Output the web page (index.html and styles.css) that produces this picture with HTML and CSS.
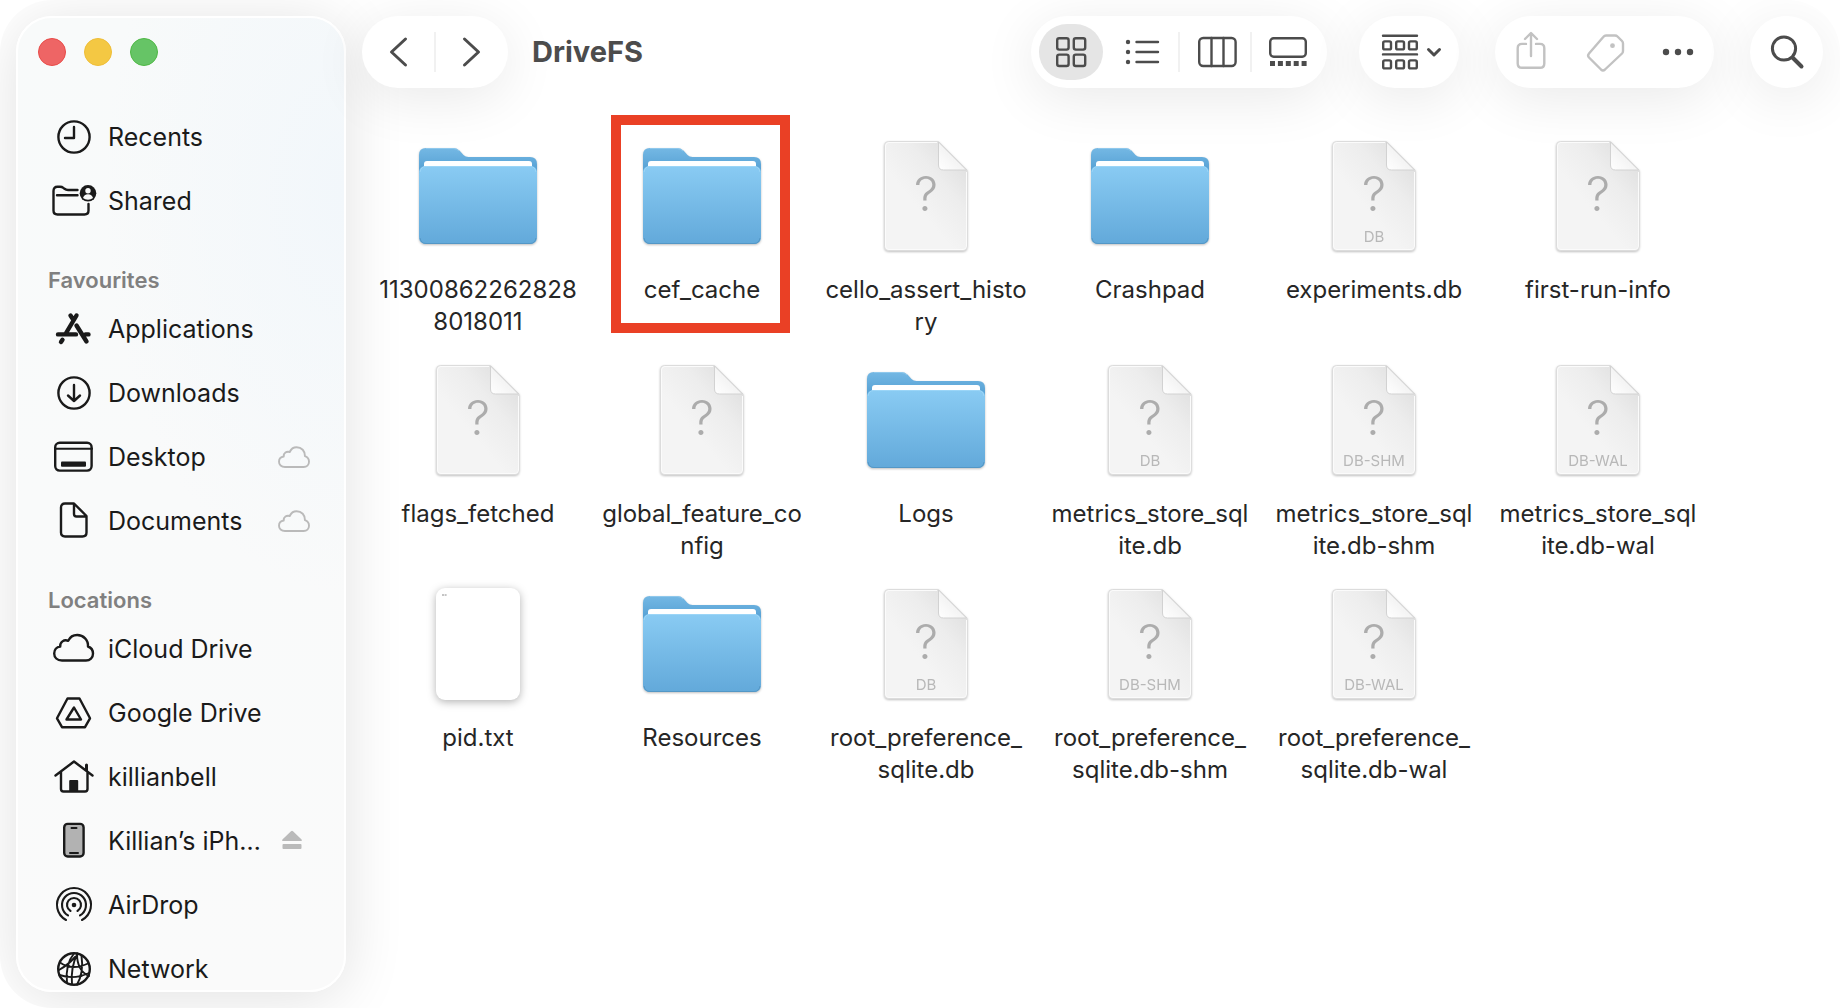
FILE: index.html
```html
<!DOCTYPE html>
<html lang="en-GB">
<head>
<meta charset="utf-8">
<title>DriveFS</title>
<link rel="stylesheet" href="styles.css">
</head>
<body>
<svg class="defs" aria-hidden="true">
  <defs>
    <linearGradient id="folder-front" x1="0" y1="0" x2="0" y2="1">
      <stop offset="0" stop-color="#89cbf3"/><stop offset="1" stop-color="#62a9da"/>
    </linearGradient>
    <linearGradient id="folder-back" x1="0" y1="0" x2="0" y2="1">
      <stop offset="0" stop-color="#74b8e4"/><stop offset="1" stop-color="#4f9bd0"/>
    </linearGradient>
    <linearGradient id="page-fill" x1="0.95" y1="0.1" x2="0.45" y2="0.65">
      <stop offset="0" stop-color="#dedede"/><stop offset="0.5" stop-color="#ededed"/><stop offset="1" stop-color="#f4f4f4"/>
    </linearGradient>
    <linearGradient id="fold-fill" x1="0" y1="1" x2="0.6" y2="0.4">
      <stop offset="0" stop-color="#ffffff"/><stop offset="1" stop-color="#f1f1f1"/>
    </linearGradient>
  </defs>

  <symbol id="folder" viewBox="0 0 128 128">
    <path d="M5 40V23q0-7 7-7h27q4 0 6.500 2.500l4 4.500q2 2 5 2H116q7 0 7 7v12H5z" fill="url(#folder-back)"/>
    <path d="M12 16.500h27q4 0 6 2.500" fill="none" stroke="#8fc8ec"/>
    <path d="M10 44V32q0-3 3-3H115q3 0 3 3v12z" fill="#fff"/>
    <path d="M5 41q0-7 7-7H116q7 0 7 7v64q0 7-7 7H12q-7 0-7-7z" fill="url(#folder-front)"/>
    <path d="M6 106q1 5.500 6 5.500H116q5 0 6-5.500" fill="none" stroke="#5397c6"/>
    <path d="M6 40q1-5.500 6-5.500H116q5 0 6 5.500" fill="none" stroke="#9bd5f7"/>
  </symbol>
  <symbol id="page" viewBox="0 0 128 128">
    <path d="M26.500 9.500H76.500L105 38V114.500q0 4-4 4H26.500q-4 0-4-4V13.500q0-4 4-4z" fill="url(#page-fill)" stroke="#dcdcdc"/>
    <path d="M104.500 40V114q0 3.500-3.500 3.500H27q-3.500 0-3.500-3.500V14q0-3.500 3.500-3.500H75" fill="none" stroke="#fbfbfb"/>
    <path d="M76.500 10V33q0 5 5 5H104.500z" fill="url(#fold-fill)" stroke="#d2d2d2"/>
  </symbol>
  <symbol id="text-page" viewBox="0 0 128 128">
    <rect x="22" y="8" width="84" height="112" rx="9" fill="#fff"/>
    <path d="M28 15h5" fill="none" stroke="#8a8a8a" stroke-dasharray="2 .6"/>
  </symbol>

  <symbol id="i-clock" viewBox="0 0 48 48"><circle cx="24" cy="24" r="15.600"/><path d="M24 14V25H15"/></symbol>
  <symbol id="i-shared" viewBox="0 0 48 48">
    <path d="M27.500 13H18q-2 0-3.500-1.200l-1.200-.900Q12 9.800 10 9.800H7.500Q3.500 9.800 3.500 14V33.500q0 4 4 4H34.500q4 0 4-4V27M7 18.200H27.500"/>
    <circle class="solid" cx="38" cy="16.300" r="8.300"/>
    <circle class="hollow" cx="38" cy="13.800" r="2.700"/><path class="hollow" d="M33 21q1-3.800 5-3.800t5 3.800q-2 1.800-5 1.800t-5-1.800z"/>
  </symbol>
  <symbol id="i-apps" viewBox="0 0 48 48">
    <g stroke-width="4.400"><path d="M26.500 10.500L15.500 29M20.500 10.500L23.500 15M26.500 20.500L36.500 36.500M8 29.400H26M35.500 29.400H38.500M12.500 34.800L11 37"/></g>
  </symbol>
  <symbol id="i-download" viewBox="0 0 48 48"><circle cx="24" cy="24" r="15.600"/><path d="M24 16V32M18 26.500L24 32l6-5.500"/></symbol>
  <symbol id="i-desktop" viewBox="0 0 48 48"><rect x="5.200" y="9.800" width="36.400" height="27.800" rx="4.500"/><path d="M5 15.700H42" stroke-width="2"/><rect class="solid" x="11" y="28.500" width="25" height="5.200" rx="1"/></symbol>
  <symbol id="i-doc" viewBox="0 0 48 48"><path d="M15 6.500H24L36.500 19V35.500q0 4-4 4H15q-4 0-4-4V10.500q0-4 4-4zM24 7V17q0 2.500 2.500 2.500H36"/></symbol>
  <symbol id="i-cloud" viewBox="0 0 48 48"><path d="M12 35.500C7 35.500 4.200 32.300 4.200 28.500C4.200 25 6.500 22 10.200 21.500C9.800 17 14 14.200 18.200 15.800C20 12 23.500 10 27.200 10C33.500 10 38.400 15 38 21.500C41 22.500 43 25.300 43 28.700C43 32.600 40 35.500 36 35.500Z"/></symbol>
  <symbol id="i-drive" viewBox="0 0 48 48"><path d="M17.500 9.500H29.500L40 29.300L35 38.200H12L7 29.300ZM24 18.500L31 30.500H16.500Z"/></symbol>
  <symbol id="i-home" viewBox="0 0 48 48"><path d="M5.500 22.500L24 8.500L42.500 22.500M11 19V36q0 2.500 2.500 2.500H35q2.500 0 2.500-2.500V19"/><path class="solid" d="M19.200 38V28q0-1 1-1h7q1 0 1 1v10zM35 17v-5q0-1.500 1.500-1.500t1.500 1.500v7z"/></symbol>
  <symbol id="i-phone" viewBox="0 0 48 48"><rect x="14.200" y="6.900" width="19.400" height="32.600" rx="3.500" fill="#b2b2b2"/><path d="M21.500 11h5M20 36h8" stroke-width="2"/></symbol>
  <symbol id="i-airdrop" viewBox="0 0 48 48">
    <g stroke-width="2.100"><path d="M16 39A17 17 0 1 1 32 39M18 34.400A12 12 0 1 1 30 34.400M20.500 30A7 7 0 1 1 27.500 30"/></g><circle class="solid" cx="24" cy="24" r="2.300"/>
  </symbol>
  <symbol id="i-network" viewBox="0 0 48 48"><circle cx="24" cy="24" r="15.800"/>
    <g stroke-width="1.900"><path d="M24 8.500Q15 19 17 38M27.500 8.500Q20.500 22 22 39M27 8.500Q27 26 39 31M31.500 10.500Q34 28 27 39.500M10 17.500Q22 26 38 18.500M9 25Q18 20 25 12M9.500 30Q24 35 39 28"/></g><circle class="solid" cx="18.500" cy="21" r="1.500"/><circle class="solid" cx="31" cy="30.500" r="1.500"/>
  </symbol>
  <symbol id="i-cloud-small" viewBox="0 0 36 36"><path d="M9 28C5.300 28 3 25.700 3 22.700C3 20 5 17.900 7.700 17.500C7.500 14 10.500 12 13.700 13C15 10 17.700 8.200 20.600 8.200C25.500 8.200 29.200 12 29 17.200C31.300 18 33 20 33 22.800C33 25.800 30.700 28 27.700 28Z" stroke-width="1.900"/></symbol>
  <symbol id="i-eject" viewBox="0 0 36 36"><path class="solid" d="M15 8.200q1-1 2 0L25.600 16.500q1 1.500-.600 1.500H7q-1.600 0-.600-1.500zM7.500 21H24.500q1 0 1 1v3q0 1-1 1H7.500q-1 0-1-1v-3q0-1 1-1z"/></symbol>

  <symbol id="t-back" viewBox="0 0 48 48"><path d="M31.500 11L17.500 24l14 13"/></symbol>
  <symbol id="t-forward" viewBox="0 0 48 48"><path d="M16.500 11l14 13-14 13"/></symbol>
  <symbol id="t-icons" viewBox="0 0 48 48"><rect x="10.200" y="10.200" width="11.400" height="11.400" rx="2"/><rect x="26.800" y="10.200" width="11.400" height="11.400" rx="2"/><rect x="10.200" y="26.600" width="11.400" height="11.400" rx="2"/><rect x="26.800" y="26.600" width="11.400" height="11.400" rx="2"/></symbol>
  <symbol id="t-list" viewBox="0 0 48 48"><path d="M17.500 14H39M17.500 24H39M17.500 34H39"/><g class="solid"><circle cx="9" cy="14" r="2.200"/><circle cx="9" cy="24" r="2.200"/><circle cx="9" cy="34" r="2.200"/></g></symbol>
  <symbol id="t-columns" viewBox="0 0 48 48"><rect x="8.200" y="10" width="36.400" height="28" rx="4"/><path d="M20.500 10V38M32.500 10V38"/></symbol>
  <symbol id="t-gallery" viewBox="0 0 48 48"><rect x="7.200" y="10.200" width="35.600" height="18.600" rx="3.500"/><path d="M7 35.500H44" stroke-width="5" stroke-linecap="butt" stroke-dasharray="5 2.900"/></symbol>
  <symbol id="t-group" viewBox="0 0 48 48"><path d="M7 7.700H41M7 26.400H41"/><g><rect x="7.200" y="13.400" width="7.800" height="8" rx="1.500"/><rect x="20.200" y="13.400" width="7.800" height="8" rx="1.500"/><rect x="33" y="13.400" width="7.800" height="8" rx="1.500"/><rect x="7.200" y="32.400" width="7.800" height="8" rx="1.500"/><rect x="20.200" y="32.400" width="7.800" height="8" rx="1.500"/><rect x="33" y="32.400" width="7.800" height="8" rx="1.500"/></g></symbol>
  <symbol id="t-chevron" viewBox="0 0 16 48"><path d="M2.500 21.500L8 27l5.500-5.500"/></symbol>
  <symbol id="t-share" viewBox="0 0 48 48"><path d="M18 15.900H14q-4.300 0-4.300 4.300V35.500q0 4.300 4.300 4.300H32q4.300 0 4.300-4.300V20.200q0-4.300-4.300-4.300H28M23 5.500V28M17 11l6-6 6 6"/></symbol>
  <symbol id="t-tag" viewBox="0 0 48 48"><path d="M25 7.500H34Q35.500 7.500 36.500 8.500L41 13Q42 14 42 15.500V23Q42 24.500 41 25.500L24 41.500Q22 43.300 20 41.500L8 29.500Q6.200 27.500 8 25.500L22.500 8.800Q23.500 7.500 25 7.500Z"/><circle class="solid" cx="31.500" cy="17.700" r="2.400"/></symbol>
  <symbol id="t-more" viewBox="0 0 48 48"><g class="solid"><circle cx="12" cy="24" r="3.200"/><circle cx="24" cy="24" r="3.200"/><circle cx="36" cy="24" r="3.200"/></g></symbol>
  <symbol id="t-search" viewBox="0 0 48 48"><g stroke-width="3"><circle cx="21" cy="20.500" r="11.600"/></g><path d="M30 30L38.500 38.500" stroke-width="4"/></symbol>
</svg>

<div class="window">
  <aside class="sidebar">
    <div class="lights">
      <button class="light light-close" aria-label="Close"></button>
      <button class="light light-minimise" aria-label="Minimise"></button>
      <button class="light light-zoom" aria-label="Zoom"></button>
    </div>
    <nav class="places">
      <a class="place" href="#"><svg class="icon"><use href="#i-clock"/></svg><span class="place-name">Recents</span></a>
      <a class="place" href="#"><svg class="icon"><use href="#i-shared"/></svg><span class="place-name">Shared</span></a>
      <h2 class="section">Favourites</h2>
      <a class="place" href="#"><svg class="icon"><use href="#i-apps"/></svg><span class="place-name">Applications</span></a>
      <a class="place" href="#"><svg class="icon"><use href="#i-download"/></svg><span class="place-name">Downloads</span></a>
      <a class="place" href="#"><svg class="icon"><use href="#i-desktop"/></svg><span class="place-name">Desktop</span><svg class="status"><use href="#i-cloud-small"/></svg></a>
      <a class="place" href="#"><svg class="icon"><use href="#i-doc"/></svg><span class="place-name">Documents</span><svg class="status"><use href="#i-cloud-small"/></svg></a>
      <h2 class="section">Locations</h2>
      <a class="place" href="#"><svg class="icon"><use href="#i-cloud"/></svg><span class="place-name">iCloud Drive</span></a>
      <a class="place" href="#"><svg class="icon"><use href="#i-drive"/></svg><span class="place-name">Google Drive</span></a>
      <a class="place" href="#"><svg class="icon"><use href="#i-home"/></svg><span class="place-name">killianbell</span></a>
      <a class="place" href="#"><svg class="icon"><use href="#i-phone"/></svg><span class="place-name">Killian’s iPh…</span><svg class="status"><use href="#i-eject"/></svg></a>
      <a class="place" href="#"><svg class="icon"><use href="#i-airdrop"/></svg><span class="place-name">AirDrop</span></a>
      <a class="place" href="#"><svg class="icon"><use href="#i-network"/></svg><span class="place-name">Network</span></a>
    </nav>
  </aside>

  <main class="content">
    <header class="toolbar">
      <div class="group nav-group">
        <button class="tool" aria-label="Back"><svg class="icon"><use href="#t-back"/></svg></button>
        <span class="divider"></span>
        <button class="tool" aria-label="Forward"><svg class="icon"><use href="#t-forward"/></svg></button>
      </div>
      <h1 class="title">DriveFS</h1>
      <div class="view-tools">
        <div class="group view-group">
          <button class="tool view selected" aria-label="Icons"><svg class="icon"><use href="#t-icons"/></svg></button>
          <span class="divider clear"></span>
          <button class="tool view" aria-label="List"><svg class="icon"><use href="#t-list"/></svg></button>
          <span class="divider"></span>
          <button class="tool view" aria-label="Columns"><svg class="icon"><use href="#t-columns"/></svg></button>
          <span class="divider"></span>
          <button class="tool view" aria-label="Gallery"><svg class="icon"><use href="#t-gallery"/></svg></button>
        </div>
        <div class="group">
          <button class="tool arrange" aria-label="Group by"><svg class="icon"><use href="#t-group"/></svg><svg class="chevron"><use href="#t-chevron"/></svg></button>
        </div>
      </div>
      <div class="group">
        <button class="tool" disabled aria-label="Share"><svg class="icon"><use href="#t-share"/></svg></button>
        <button class="tool" disabled aria-label="Tags"><svg class="icon"><use href="#t-tag"/></svg></button>
        <button class="tool" aria-label="More"><svg class="icon"><use href="#t-more"/></svg></button>
      </div>
      <div class="group">
        <button class="tool" aria-label="Search"><svg class="icon"><use href="#t-search"/></svg></button>
      </div>
    </header>

    <ul class="files">
      <li class="file"><svg class="art folder"><use href="#folder"/></svg><span class="name">11300862262828<br>8018011</span></li>
      <li class="file marked"><svg class="art folder"><use href="#folder"/></svg><span class="name">cef_cache</span></li>
      <li class="file"><svg class="art page"><use href="#page"/><text class="mark" x="64" y="79">?</text></svg><span class="name">cello_assert_histo<br>ry</span></li>
      <li class="file"><svg class="art folder"><use href="#folder"/></svg><span class="name">Crashpad</span></li>
      <li class="file"><svg class="art page"><use href="#page"/><text class="mark" x="64" y="79">?</text><text class="kind" x="64" y="110">DB</text></svg><span class="name">experiments.db</span></li>
      <li class="file"><svg class="art page"><use href="#page"/><text class="mark" x="64" y="79">?</text></svg><span class="name">first-run-info</span></li>

      <li class="file"><svg class="art page"><use href="#page"/><text class="mark" x="64" y="79">?</text></svg><span class="name">flags_fetched</span></li>
      <li class="file"><svg class="art page"><use href="#page"/><text class="mark" x="64" y="79">?</text></svg><span class="name">global_feature_co<br>nfig</span></li>
      <li class="file"><svg class="art folder"><use href="#folder"/></svg><span class="name">Logs</span></li>
      <li class="file"><svg class="art page"><use href="#page"/><text class="mark" x="64" y="79">?</text><text class="kind" x="64" y="110">DB</text></svg><span class="name">metrics_store_sql<br>ite.db</span></li>
      <li class="file"><svg class="art page"><use href="#page"/><text class="mark" x="64" y="79">?</text><text class="kind" x="64" y="110">DB-SHM</text></svg><span class="name">metrics_store_sql<br>ite.db-shm</span></li>
      <li class="file"><svg class="art page"><use href="#page"/><text class="mark" x="64" y="79">?</text><text class="kind" x="64" y="110">DB-WAL</text></svg><span class="name">metrics_store_sql<br>ite.db-wal</span></li>

      <li class="file"><svg class="art text-page"><use href="#text-page"/></svg><span class="name">pid.txt</span></li>
      <li class="file"><svg class="art folder"><use href="#folder"/></svg><span class="name">Resources</span></li>
      <li class="file"><svg class="art page"><use href="#page"/><text class="mark" x="64" y="79">?</text><text class="kind" x="64" y="110">DB</text></svg><span class="name">root_preference_<br>sqlite.db</span></li>
      <li class="file"><svg class="art page"><use href="#page"/><text class="mark" x="64" y="79">?</text><text class="kind" x="64" y="110">DB-SHM</text></svg><span class="name">root_preference_<br>sqlite.db-shm</span></li>
      <li class="file"><svg class="art page"><use href="#page"/><text class="mark" x="64" y="79">?</text><text class="kind" x="64" y="110">DB-WAL</text></svg><span class="name">root_preference_<br>sqlite.db-wal</span></li>
    </ul>
  </main>
</div>
</body>
</html>
```
FILE: styles.css
```css
* {
  box-sizing: border-box;
}

body {
  margin: 0;
  background: #fff;
  color: #262626;
  font-family: Inter, "Liberation Sans", sans-serif;
}

button {
  margin: 0;
  padding: 0;
  border: 0;
  background: none;
  color: inherit;
  font: inherit;
}

.defs {
  position: absolute;
  width: 0;
  height: 0;
}

.window {
  display: flex;
  min-height: 100vh;
  border-radius: 52px;
  background: #fff;
  overflow: hidden;
}

/* Sidebar */

.sidebar {
  flex: 0 0 330px;
  height: calc(100vh - 32px);
  margin: 16px 0 16px 16px;
  border: 2px solid #fff;
  border-radius: 36px;
  background:
    radial-gradient(ellipse 240px 400px at 100% 18%, #f2f7fb, rgba(242, 247, 251, 0)),
    linear-gradient(#f8fafa, #fafafa);
  box-shadow: 0 6px 60px rgba(0, 0, 0, 0.12);
  color: #1a1a1a;
  overflow: hidden;
}

.lights {
  display: flex;
  gap: 18px;
  height: 87px;
  padding: 20px 20px 0;
}

.light {
  width: 28px;
  height: 28px;
  border: 1px solid;
  border-radius: 50%;
}

.light-close {
  background: #ee6565;
  border-color: #e84b48;
}

.light-minimise {
  background: #f4c843;
  border-color: #eebd38;
}

.light-zoom {
  background: #66c466;
  border-color: #4fb845;
}

.section {
  margin: 0;
  padding: 30px 30px 0;
  color: #808080;
  font-size: 22px;
  font-weight: 600;
  line-height: 34px;
}

.place {
  display: flex;
  align-items: center;
  gap: 10px;
  height: 64px;
  padding: 0 32px;
  color: inherit;
  font-size: 25px;
  line-height: 32px;
  text-decoration: none;
  white-space: nowrap;
}

.place-name {
  flex: 1;
}

.icon {
  flex: none;
  width: 48px;
  height: 48px;
}

.icon,
.chevron,
.status {
  fill: none;
  stroke: currentColor;
  stroke-width: 2.4px;
  stroke-linecap: round;
  stroke-linejoin: round;
}

.solid {
  fill: currentColor;
  stroke: none;
}

.hollow {
  fill: #f9fafa;
  stroke: none;
}

.status {
  flex: none;
  width: 36px;
  height: 36px;
  color: #bababa;
}

/* Toolbar */

.content {
  flex: 1;
  min-width: 0;
}

.toolbar {
  display: flex;
  align-items: center;
  gap: 36px;
  padding: 16px 17px 0 16px;
  color: #4c4c4c;
}

.group {
  display: flex;
  align-items: center;
  height: 72px;
  border-radius: 36px;
  background: #fff;
  box-shadow: 0 10px 56px rgba(0, 0, 0, 0.09);
}

.tool {
  display: flex;
  align-items: center;
  justify-content: center;
  width: 73px;
  height: 56px;
  border-radius: 28px;
}

.tool:disabled {
  color: #c2c2c2;
}

.nav-group .tool {
  width: 72px;
}

.nav-group .icon {
  stroke-width: 3px;
}

.view-tools {
  display: flex;
  gap: 32px;
}

.view-group {
  padding: 0 8px;
}

.tool.view {
  width: 64px;
}

.tool.selected {
  background: #e5e5e5;
}

.tool.arrange {
  gap: 2px;
  width: 100px;
}

.chevron {
  width: 16px;
  height: 48px;
  stroke-width: 3px;
}

.divider {
  width: 2px;
  height: 40px;
  background: #f1f1f1;
}

.view-group .divider {
  margin: 0 3px;
}

.divider.clear {
  background: none;
}

.title {
  flex: 1;
  margin: 0 0 0 -12px;
  font-size: 29px;
  font-weight: 700;
  line-height: 36px;
}

/* Files */

.files {
  display: grid;
  grid-template-columns: repeat(auto-fill, 224px);
  grid-auto-rows: 224px;
  margin: 44px 0 0;
  padding: 0 0 32px 20px;
  list-style: none;
}

.file {
  position: relative;
  display: flex;
  flex-direction: column;
  align-items: center;
  gap: 14px;
}

.art {
  width: 128px;
  height: 128px;
}

.art.folder,
.art.page {
  filter: drop-shadow(0 1px 1px rgba(0, 0, 0, 0.25));
}

.art.text-page {
  filter: drop-shadow(0 2px 4px rgba(0, 0, 0, 0.3));
}

.mark {
  fill: #acacac;
  font-size: 48px;
  font-weight: 300;
  text-anchor: middle;
}

.kind {
  fill: #b8b8b8;
  font-size: 15px;
  text-anchor: middle;
}

.name {
  font-size: 24px;
  line-height: 32px;
  text-align: center;
  white-space: nowrap;
}

/* Highlight frame drawn over the folder of interest */
.marked::after {
  content: "";
  position: absolute;
  inset: -17px 24px 23px 21px;
  border: 10px solid #ea4025;
}
```
